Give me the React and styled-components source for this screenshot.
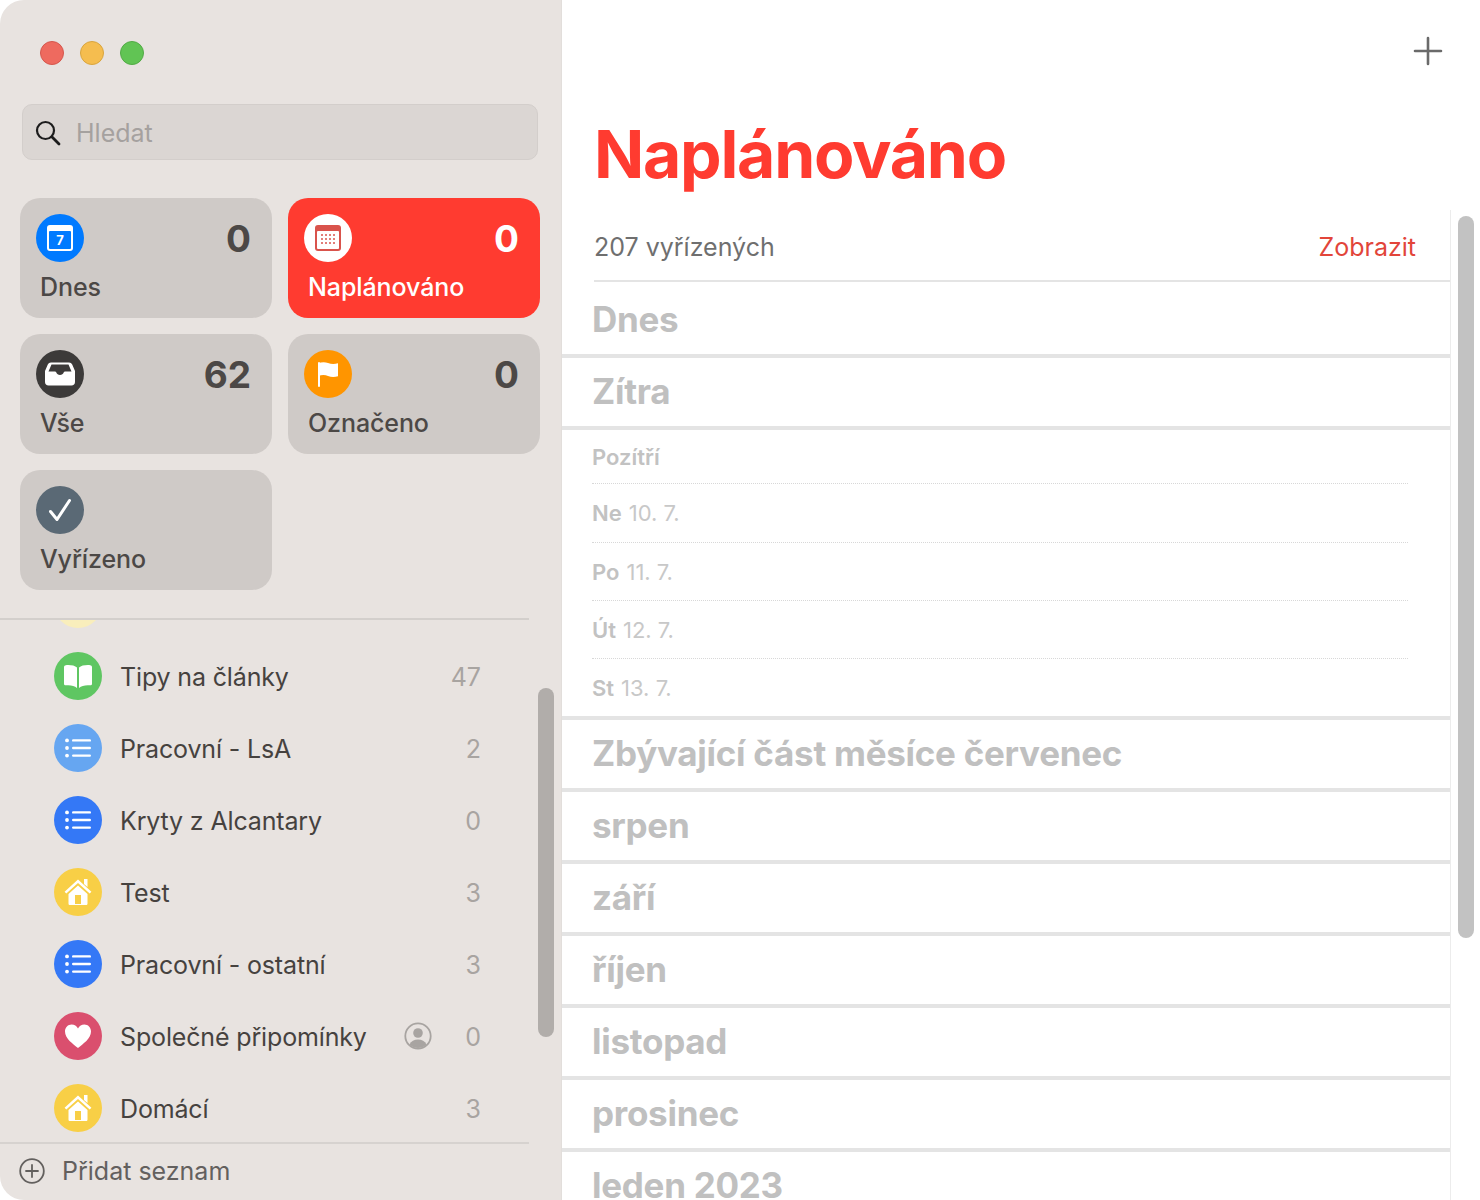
import React from "react";
import styled, { createGlobalStyle } from "styled-components";

const GlobalStyle = createGlobalStyle`
  html, body { margin: 0; padding: 0; background: #fff; }
  body { font-family: Inter, "Noto Sans", sans-serif; -webkit-font-smoothing: antialiased; }
  * { box-sizing: border-box; }
`;

const Window = styled.div`
  display: flex;
  width: 1480px;
  height: 1200px;
  overflow: hidden;
  background: #fff;
`;

const Sidebar = styled.aside`
  position: relative;
  display: flex;
  flex-direction: column;
  width: 562px;
  height: 1200px;
  background: #e8e3e0;
  border-radius: 24px 0 0 24px;
  border-right: 1px solid #e2dedb;
`;

const TitleBar = styled.div`
  display: flex;
  align-items: center;
  gap: 16px;
  height: 104px;
  padding: 2px 0 0 40px;
`;

const Light = styled.span`
  width: 24px;
  height: 24px;
  border-radius: 50%;
  background: ${(p) => p.$color};
  border: 1px solid ${(p) => p.$edge};
`;

const Search = styled.div`
  display: flex;
  align-items: center;
  gap: 15px;
  height: 56px;
  margin: 0 23px 0 22px;
  padding: 2px 0 0 12px;
  background: #dbd6d3;
  border: 1px solid #d3cecb;
  border-radius: 10px;
  color: #a5a19f;
  font-size: 25px;
`;

const Cards = styled.div`
  display: grid;
  grid-template-columns: 252px 252px;
  grid-auto-rows: 120px;
  gap: 16px;
  padding: 38px 0 0 20px;
`;

const Card = styled.div`
  display: flex;
  flex-direction: column;
  padding: 16px 21px 0 16px;
  border-radius: 20px;
  background: ${(p) => (p.$active ? "#ff3b30" : "#cfcac7")};
  color: ${(p) => (p.$active ? "#fff" : "#4c4846")};
`;

const CardTop = styled.div`
  display: flex;
  justify-content: space-between;
  align-items: center;
  height: 48px;
`;

const CardCount = styled.span`
  padding-top: 2px;
  font-size: 37px;
  font-weight: 700;
  line-height: 48px;
`;

const CardLabel = styled.span`
  margin: 8px 0 0 4px;
  font-size: 25px;
  font-weight: 500;
  letter-spacing: -0.1px;
  line-height: 34px;
`;

const Circle = styled.span`
  display: flex;
  align-items: center;
  justify-content: center;
  flex: none;
  width: 48px;
  height: 48px;
  border-radius: 50%;
  background: ${(p) => p.$color};
`;

const ListArea = styled.div`
  flex: 1;
  min-height: 0;
  margin: 28px 32px 0 0;
  overflow: hidden;
  border-top: 2px solid #d3cfcc;
`;

const ListScroll = styled.div`
  margin-top: -52px;
`;

const Row = styled.div`
  display: flex;
  align-items: center;
  height: 72px;
  padding: 0 48px 0 54px;
`;

const RowName = styled.span`
  flex: 1;
  margin: 2px 0 0 18px;
  font-size: 25px;
  letter-spacing: -0.15px;
  color: #46423f;
`;

const RowCount = styled.span`
  width: 48px;
  margin-top: 2px;
  text-align: right;
  font-size: 25px;
  color: #a8a4a1;
`;

const Shared = styled.span`
  display: flex;
  margin: 0 1px 0 0;
`;

const Footer = styled.div`
  display: flex;
  align-items: center;
  gap: 17px;
  height: 58px;
  margin-right: 32px;
  padding: 0 0 2px 19px;
  border-top: 2px solid #d6d2cf;
  color: #63605e;
  font-size: 25px;
`;

const Thumb = styled.div`
  position: absolute;
  left: ${(p) => p.$left}px;
  top: ${(p) => p.$top}px;
  width: 16px;
  height: ${(p) => p.$height}px;
  border-radius: 8px;
  background: ${(p) => p.$color};
`;

const Main = styled.main`
  position: relative;
  flex: 1;
  min-width: 0;
  display: flex;
  flex-direction: column;
`;

const Toolbar = styled.div`
  display: flex;
  justify-content: flex-end;
  height: 100px;
  padding: 36px 37px 0 0;
`;

const Title = styled.h1`
  margin: 0;
  height: 110px;
  padding-left: 32px;
  font-size: 66px;
  font-weight: 700;
  line-height: 108px;
  letter-spacing: -1.25px;
  color: #ff3b30;
`;

const Scroller = styled.div`
  flex: 1;
  min-height: 0;
  width: 889px;
  overflow: hidden;
  border-right: 1px solid #ececec;
`;

const DoneRow = styled.div`
  display: flex;
  justify-content: space-between;
  align-items: center;
  height: 72px;
  margin-left: 32px;
  padding: 3px 34px 0 0;
  border-bottom: 2px solid #e4e4e4;
  font-size: 25px;
  color: #6f6f6f;
`;

const ShowLink = styled.span`
  color: #e2453a;
`;

const Section = styled.div`
  display: flex;
  align-items: center;
  height: ${(p) => (p.$first ? 76 : 72)}px;
  padding: ${(p) => (p.$first ? "2px 0 0 30px" : "0 0 2px 30px")};
  border-bottom: 4px solid #e4e4e4;
  font-size: 35px;
  font-weight: 700;
  letter-spacing: -0.27px;
  color: #c0c0c0;
  white-space: nowrap;
`;

const DayGroup = styled.div`
  border-bottom: 4px solid #e4e4e4;
  padding-left: 30px;
`;

const Day = styled.div`
  display: flex;
  align-items: center;
  width: 816px;
  height: ${(p) => p.$height}px;
  border-bottom: ${(p) => (p.$last ? "none" : "1px dotted #d8d8d8")};
  font-size: 22px;
  color: #c8c8c8;
`;

const DayName = styled.b`
  font-weight: 600;
  color: #c2c2c2;
  margin-right: 7px;
`;

const ListIcon = () => (
  <svg width="26" height="20" viewBox="0 0 26 20" fill="#fff">
    <circle cx="2" cy="2.4" r="1.9" />
    <circle cx="2" cy="10" r="1.9" />
    <circle cx="2" cy="17.6" r="1.9" />
    <rect x="7" y="1.2" width="19" height="2.4" rx="1.2" />
    <rect x="7" y="8.8" width="19" height="2.4" rx="1.2" />
    <rect x="7" y="16.4" width="19" height="2.4" rx="1.2" />
  </svg>
);

const HomeIcon = () => (
  <svg width="28" height="28" viewBox="0 0 28 28" fill="#fff">
    <path d="M20 1h3.500v8l-3.500-3z" />
    <path d="M14 1.500 .6 13.700l1.700 1.900L14 5l11.700 10.600 1.700-1.900z" />
    <path fillRule="evenodd" d="M14 7.400 4.500 16v9.500c0 1 .6 1.500 1.500 1.500h16c.9 0 1.500-.5 1.500-1.500V16zM11 17h6v9h-6z" />
  </svg>
);

const BookIcon = () => (
  <svg width="28" height="24" viewBox="0 0 28 24" fill="#fff">
    <path d="M13 3.600C10.800 1.600 6.600.8 1.800 1.200.8 1.300 0 2.100 0 3.100v16.600c0 1 .9 1.700 1.900 1.600 4.500-.5 8.600.4 11.100 2.700z" />
    <path d="M15 3.600c2.200-2 6.400-2.800 11.200-2.400 1 .1 1.800.9 1.800 1.900v16.600c0 1-.9 1.700-1.900 1.600-4.500-.5-8.600.4-11.100 2.700z" />
  </svg>
);

const HeartIcon = () => (
  <svg width="28" height="26" viewBox="0 0 28 26" fill="#fff">
    <path d="M14 25C9 21 1 15.500 1 8.500 1 4.300 4.100 1.500 7.600 1.500c2.800 0 5 1.500 6.400 4 1.400-2.500 3.600-4 6.400-4C23.900 1.500 27 4.300 27 8.500 27 15.500 19 21 14 25z" />
  </svg>
);

const rows = [
  { name: "Tipy na články", count: 47, color: "#5fc662", icon: <BookIcon /> },
  { name: "Pracovní - LsA", count: 2, color: "#66a6f1", icon: <ListIcon /> },
  { name: "Kryty z Alcantary", count: 0, color: "#3478f6", icon: <ListIcon /> },
  { name: "Test", count: 3, color: "#f8cf46", icon: <HomeIcon /> },
  { name: "Pracovní - ostatní", count: 3, color: "#3478f6", icon: <ListIcon /> },
  { name: "Společné připomínky", count: 0, color: "#da4f6e", icon: <HeartIcon />, shared: true },
  { name: "Domácí", count: 3, color: "#f8cf46", icon: <HomeIcon /> },
];

const days = [
  ["Pozítří", "", 54],
  ["Ne", "10. 7.", 59],
  ["Po", "11. 7.", 58],
  ["Út", "12. 7.", 58],
  ["St", "13. 7.", 57],
];

const months = ["Zbývající část měsíce červenec", "srpen", "září", "říjen", "listopad", "prosinec", "leden 2023"];

export default function App() {
  return (
    <Window>
      <GlobalStyle />
      <Sidebar>
        <TitleBar>
          <Light $color="#ee6a5f" $edge="#d5574d" />
          <Light $color="#f5bd4f" $edge="#d9a53e" />
          <Light $color="#61c454" $edge="#52ab46" />
        </TitleBar>
        <Search>
          <svg width="26" height="26" viewBox="0 0 26 26" fill="none" stroke="#1c1c1c" strokeWidth="2.2">
            <circle cx="10.500" cy="10.500" r="8.500" />
            <path d="m16.800 16.800 7.200 7.200" strokeLinecap="round" strokeWidth="2.800" />
          </svg>
          Hledat
        </Search>
        <Cards>
          <Card>
            <CardTop>
              <Circle $color="#007aff">
                <svg width="28" height="28" viewBox="0 0 28 28">
                  <rect x="1" y="1" width="26" height="26" rx="3" fill="#fff" />
                  <rect x="3" y="7" width="22" height="18" rx="1" fill="#007aff" />
                  <text x="14" y="21" textAnchor="middle" fontSize="13" fontWeight="700" fill="#fff" fontFamily="Inter, sans-serif">7</text>
                </svg>
              </Circle>
              <CardCount>0</CardCount>
            </CardTop>
            <CardLabel>Dnes</CardLabel>
          </Card>
          <Card $active>
            <CardTop>
              <Circle $color="#fff">
                <svg width="28" height="28" viewBox="0 0 28 28">
                  <rect x="1" y="1" width="26" height="26" rx="3" fill="#d9534c" />
                  <rect x="3" y="7" width="22" height="18" rx="1" fill="#fff" />
                  {[8, 12, 16, 20].map((x) =>
                    [11, 15, 19].map((y) => <circle key={`${x}-${y}`} cx={x} cy={y} r="1" fill="#d9534c" />)
                  )}
                </svg>
              </Circle>
              <CardCount>0</CardCount>
            </CardTop>
            <CardLabel>Naplánováno</CardLabel>
          </Card>
          <Card>
            <CardTop>
              <Circle $color="#3c3a39">
                <svg width="30" height="24" viewBox="0 0 30 24" fill="#fff">
                  <path
                    fillRule="evenodd"
                    d="M6 .5h18c1.500 0 2.500.7 3.200 2L30 9v11c0 2.300-1.400 3.500-3.500 3.500h-23C1.400 23.500 0 22.300 0 20V9l2.800-6.500C3.500 1.200 4.500.5 6 .5zM6.500 2.500 3.500 9.500H10c.6 0 1 .3 1.200.8.7 1.700 2 2.700 3.800 2.700s3.100-1 3.800-2.700c.2-.5.6-.8 1.200-.8h6.500l-3-7z"
                  />
                </svg>
              </Circle>
              <CardCount>62</CardCount>
            </CardTop>
            <CardLabel>Vše</CardLabel>
          </Card>
          <Card>
            <CardTop>
              <Circle $color="#ff9500">
                <svg width="22" height="26" viewBox="0 0 22 26" fill="#fff">
                  <rect x="1" y="1" width="2" height="25" rx="1" />
                  <path d="M1 2.500C4.500.8 8 .8 11 2s6.500 1.400 10 .2v13c-3.500 1.200-7 1-10-.2s-6.500-1.300-10 .4z" />
                </svg>
              </Circle>
              <CardCount>0</CardCount>
            </CardTop>
            <CardLabel>Označeno</CardLabel>
          </Card>
          <Card>
            <CardTop>
              <Circle $color="#5a6975">
                <svg width="26" height="26" viewBox="0 0 26 26" fill="none" stroke="#fff" strokeWidth="3" strokeLinecap="round" strokeLinejoin="round">
                  <path d="m3.500 14.500 6.500 8L22.500 3.500" />
                </svg>
              </Circle>
            </CardTop>
            <CardLabel>Vyřízeno</CardLabel>
          </Card>
        </Cards>
        <ListArea>
          <ListScroll>
            <Row>
              <Circle $color="#f9eebc" />
            </Row>
            {rows.map((r) => (
              <Row key={r.name}>
                <Circle $color={r.color}>{r.icon}</Circle>
                <RowName>{r.name}</RowName>
                {r.shared && (
                  <Shared>
                    <svg width="28" height="28" viewBox="0 0 28 28" fill="#a8a4a1">
                      <circle cx="14" cy="14" r="12.700" fill="none" stroke="#a8a4a1" strokeWidth="1.800" />
                      <circle cx="14" cy="11" r="4.800" />
                      <path d="M5.500 22.500c1.500-3.400 4.700-5 8.500-5s7 1.600 8.500 5c-2.200 2.200-5.200 3.500-8.500 3.500s-6.300-1.300-8.500-3.500z" />
                    </svg>
                  </Shared>
                )}
                <RowCount>{r.count}</RowCount>
              </Row>
            ))}
          </ListScroll>
        </ListArea>
        <Footer>
          <svg width="26" height="26" viewBox="0 0 26 26" fill="none" stroke="#63605e" strokeWidth="1.800">
            <circle cx="13" cy="13" r="11.800" />
            <path d="M13 7v12M7 13h12" strokeLinecap="round" />
          </svg>
          Přidat seznam
        </Footer>
        <Thumb $left={538} $top={688} $height={349} $color="#b1adaa" />
      </Sidebar>
      <Main>
        <Toolbar>
          <svg width="30" height="30" viewBox="0 0 30 30" stroke="#6a6a6a" strokeWidth="2.600" strokeLinecap="round">
            <path d="M15 2v26M2 15h26" />
          </svg>
        </Toolbar>
        <Title>Naplánováno</Title>
        <Scroller>
          <DoneRow>
            207 vyřízených
            <ShowLink>Zobrazit</ShowLink>
          </DoneRow>
          <Section $first>Dnes</Section>
          <Section>Zítra</Section>
          <DayGroup>
            {days.map(([name, date, height], i) => (
              <Day key={name} $height={height} $last={i === days.length - 1}>
                <DayName>{name}</DayName>
                {date}
              </Day>
            ))}
          </DayGroup>
          {months.map((m) => (
            <Section key={m}>{m}</Section>
          ))}
        </Scroller>
        <Thumb $left={896} $top={216} $height={722} $color="#c2c2c2" />
      </Main>
    </Window>
  );
}
